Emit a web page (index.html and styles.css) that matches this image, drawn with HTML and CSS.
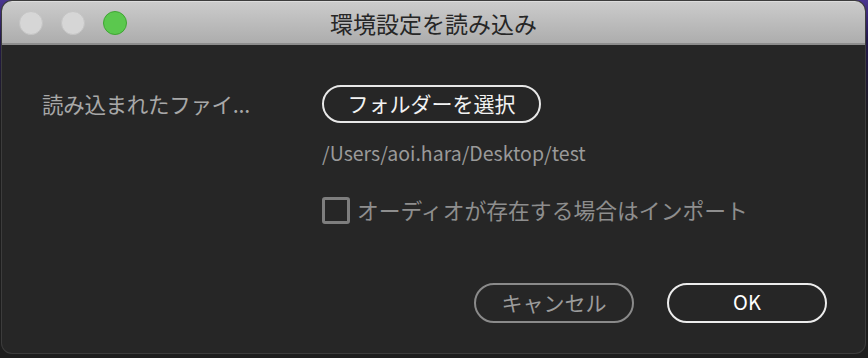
FILE: index.html
```html
<!DOCTYPE html>
<html lang="ja">
<head>
    <meta charset="UTF-8">
    <title>環境設定を読み込み</title>
    <link rel="stylesheet" href="styles.css">
</head>
<body>
    <div class="window">
        <div class="titlebar">
            <div class="lights">
                <span class="light"></span>
                <span class="light"></span>
                <span class="light green"></span>
            </div>
            <div class="title">環境設定を読み込み</div>
            <div></div>
        </div>
        <div class="content">
            <div class="form">
                <div class="label">読み込まれたファイ...</div>
                <div class="field">
                    <button class="pill select">フォルダーを選択</button>
                    <div class="path">/Users/aoi.hara/Desktop/test</div>
                    <label class="check"><span class="box"></span>オーディオが存在する場合はインポート</label>
                </div>
            </div>
            <div class="actions">
                <button class="pill cancel">キャンセル</button>
                <button class="pill ok">OK</button>
            </div>
        </div>
    </div>
</body>
</html>
```

FILE: styles.css
```css
body {
    margin: 0;
    width: 868px;
    height: 358px;
    overflow: hidden;
    background: linear-gradient(180deg, #4a3590 0px, #22184a 40px, #1d1d1d 120px);
    font-family: "Noto Sans CJK JP", sans-serif;
}
.window {
    margin: 1px 0 0 2px;
    width: 863px;
    height: 352px;
    display: flex;
    flex-direction: column;
    border-radius: 10px;
    overflow: hidden;
    background: #262626;
    box-shadow: 0 0 0 1px #3c3c3c;
}
.titlebar {
    height: 41px;
    display: grid;
    grid-template-columns: 1fr auto 1fr;
    align-items: center;
    background: linear-gradient(180deg, #cbcbcb, #adadad);
    border-top: 1px solid #dcdcdc;
    border-bottom: 2px solid #8d8d8d;
    box-sizing: content-box;
}
.lights {
    display: flex;
    gap: 18px;
    padding-left: 17px;
}
.light {
    width: 22px;
    height: 22px;
    border-radius: 50%;
    background: #d6d6d6;
    border: 1px solid #c4c4c4;
}
.light.green {
    background: #5bc84e;
    border-color: #3fa533;
}
.title {
    color: #262626;
    font-size: 23px;
    line-height: 28px;
}
.content {
    flex: 1;
    display: flex;
    flex-direction: column;
    padding: 40px 38px 30px 40px;
}
.form {
    display: grid;
    grid-template-columns: 280px 1fr;
}
.label {
    color: #a8a8a8;
    font-size: 21.5px;
    line-height: 38px;
    letter-spacing: -0.3px;
}
.field {
    display: flex;
    flex-direction: column;
    align-items: flex-start;
}
.pill {
    font-family: inherit;
    background: transparent;
    border-radius: 22px;
    padding: 0 0 2px;
    cursor: pointer;
}
.select {
    width: 219px;
    height: 38px;
    border: 2px solid #e8e8e8;
    color: #f2f2f2;
    font-size: 21px;
    line-height: 30px;
}
.path {
    margin-top: 17px;
    color: #9a9a9a;
    font-size: 19.5px;
    line-height: 26px;
}
.check {
    margin-top: 30px;
    display: flex;
    align-items: center;
    gap: 7px;
    color: #8e8e8e;
    font-size: 21.8px;
    line-height: 28px;
}
.box {
    width: 22px;
    height: 21px;
    border: 3px solid #7e7e7e;
    border-radius: 3px;
}
.actions {
    margin-top: auto;
    display: flex;
    justify-content: flex-end;
    gap: 33px;
}
.cancel, .ok {
    width: 160px;
    height: 40px;
    font-size: 21px;
    padding-bottom: 3px;
}
.cancel {
    border: 2px solid #8a8a8a;
    color: #9c9c9c;
}
.ok {
    border: 2px solid #ececec;
    color: #ffffff;
    font-size: 20px;
}
```
